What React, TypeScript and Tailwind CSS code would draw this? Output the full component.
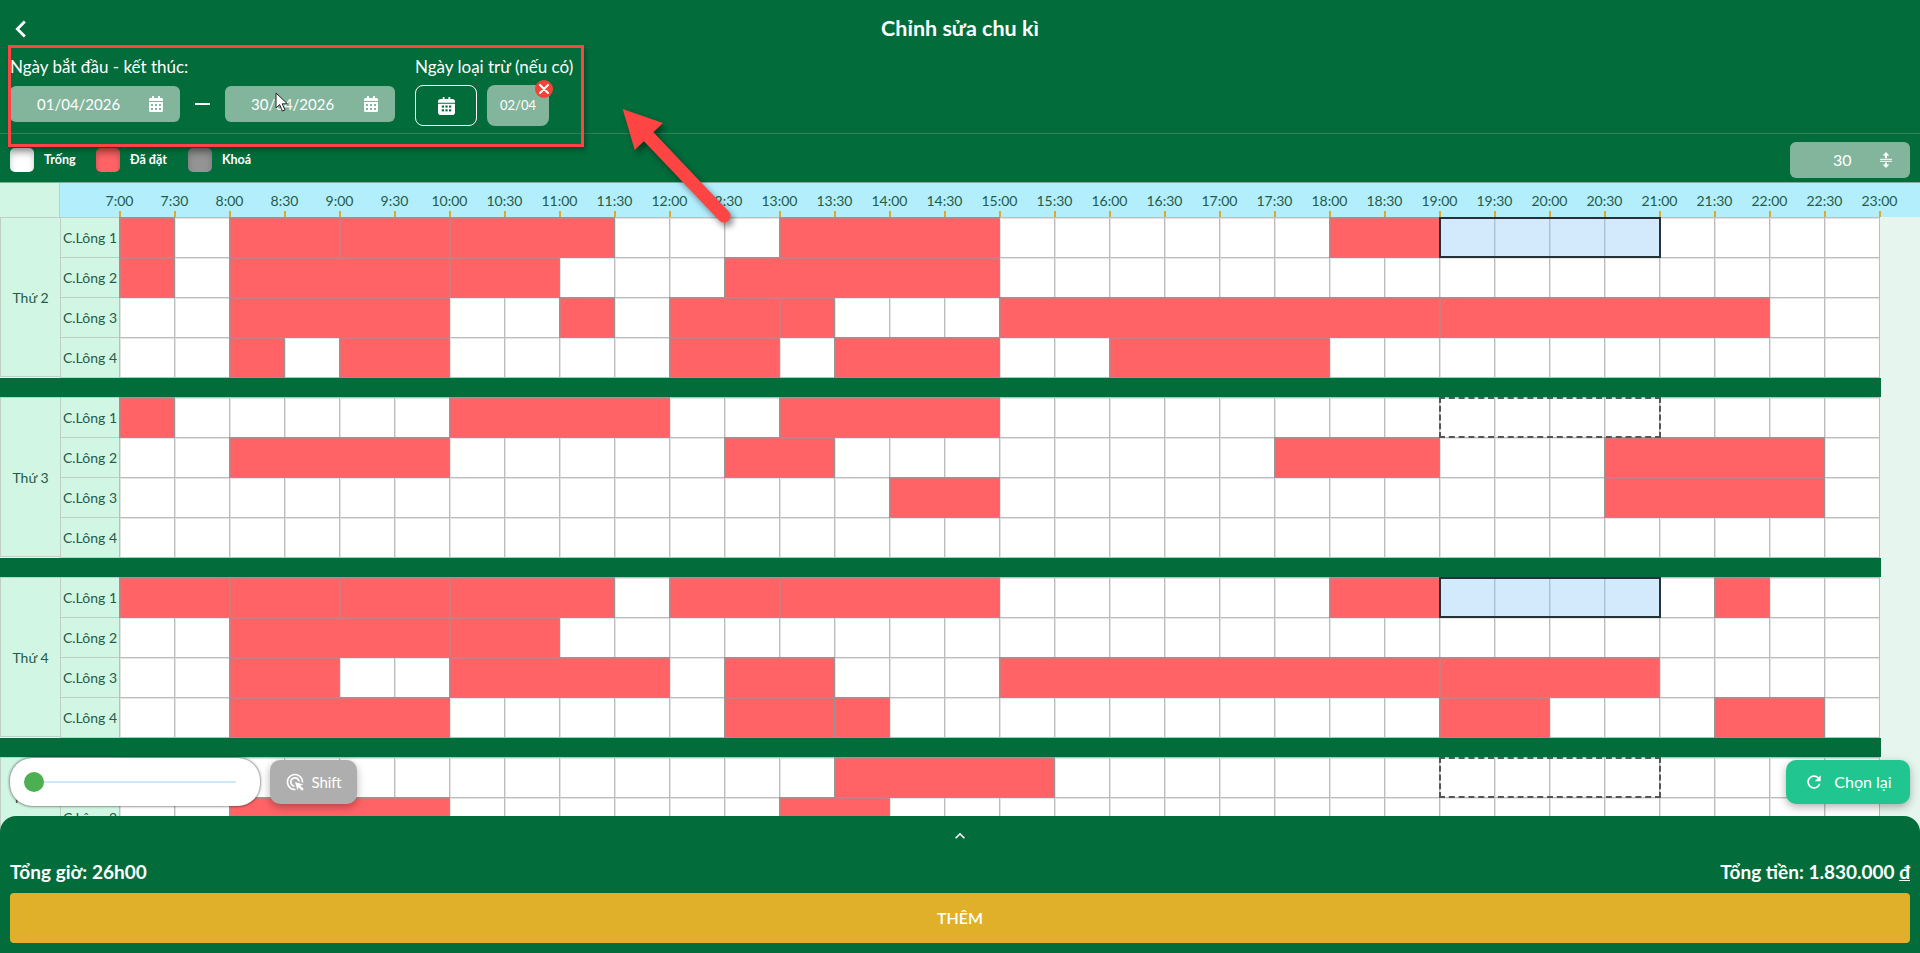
import React from 'react';
import { FaCalendarAlt } from 'react-icons/fa';
import { MdAdsClick, MdRefresh, MdChevronLeft, MdKeyboardArrowUp } from 'react-icons/md';

type Range = [number, number];

interface CourtRow {
  name: string;
  booked: Range[];
  mark?: 'selected' | 'dashed';
}

interface DayGroup {
  day: string;
  rows: CourtRow[];
}

const times = Array.from({ length: 33 }, (_, i) => `${7 + Math.floor(i / 2)}:${i % 2 ? '30' : '00'}`);

const days: DayGroup[] = [
  {
    day: 'Thứ 2',
    rows: [
      { name: 'C.Lông 1', booked: [[0, 1], [2, 4], [4, 6], [6, 9], [12, 16], [22, 24]], mark: 'selected' },
      { name: 'C.Lông 2', booked: [[0, 1], [2, 6], [6, 8], [11, 16]] },
      { name: 'C.Lông 3', booked: [[2, 6], [8, 9], [10, 12], [12, 13], [16, 24], [24, 30]] },
      { name: 'C.Lông 4', booked: [[2, 3], [4, 6], [10, 12], [13, 16], [18, 22]] },
    ],
  },
  {
    day: 'Thứ 3',
    rows: [
      { name: 'C.Lông 1', booked: [[0, 1], [6, 10], [12, 16]], mark: 'dashed' },
      { name: 'C.Lông 2', booked: [[2, 6], [11, 13], [21, 24], [27, 31]] },
      { name: 'C.Lông 3', booked: [[14, 16], [27, 31]] },
      { name: 'C.Lông 4', booked: [] },
    ],
  },
  {
    day: 'Thứ 4',
    rows: [
      { name: 'C.Lông 1', booked: [[0, 2], [2, 4], [4, 6], [6, 9], [10, 12], [12, 16], [22, 24], [29, 30]], mark: 'selected' },
      { name: 'C.Lông 2', booked: [[2, 6], [6, 8]] },
      { name: 'C.Lông 3', booked: [[2, 4], [6, 10], [11, 13], [16, 24], [24, 28]] },
      { name: 'C.Lông 4', booked: [[2, 6], [11, 13], [13, 14], [24, 26], [29, 31]] },
    ],
  },
  {
    day: 'Thứ 5',
    rows: [
      { name: 'C.Lông 1', booked: [[13, 17]], mark: 'dashed' },
      { name: 'C.Lông 2', booked: [[2, 6], [12, 14]] },
    ],
  },
];

const SLOT = 55;

const Slots: React.FC<{ booked: Range[] }> = ({ booked }) => {
  const cells: React.ReactNode[] = [];
  let i = 0;
  while (i < 32) {
    const hit = booked.find(b => b[0] === i);
    if (hit) {
      const n = hit[1] - hit[0];
      cells.push(
        <div
          key={i}
          className="relative z-10 h-[41px] shrink-0 -mr-px border border-[#969696] bg-[#ff6366] shadow-[inset_1px_1px_0_rgba(150,150,150,0.45)]"
          style={{ width: SLOT * n + 1 }}
        />
      );
      i += n;
    } else {
      cells.push(
        <div
          key={i}
          className="h-[41px] w-[56px] shrink-0 -mr-px border border-[#bdbdbd] bg-white shadow-[inset_1px_1px_0_#e4e4e4]"
        />
      );
      i += 1;
    }
  }
  return <>{cells}</>;
};

const CalendarBadge = () => (
  <svg width="17" height="18" viewBox="0 0 18 19">
    <path d="M3 2h2V0.8a1 1 0 0 1 2 0V2h4V0.8a1 1 0 0 1 2 0V2h2a3 3 0 0 1 3 3v1H0V5a3 3 0 0 1 3-3z" fill="#fff" />
    <path d="M0 7h18v9a3 3 0 0 1-3 3H3a3 3 0 0 1-3-3z" fill="#fff" />
    <g fill="#006c3a">
      <rect x="4" y="9" width="2.4" height="2.2" />
      <rect x="7.8" y="9" width="2.4" height="2.2" />
      <rect x="11.6" y="9" width="2.4" height="2.2" />
      <rect x="4" y="13" width="2.4" height="2.2" />
      <rect x="7.8" y="13" width="2.4" height="2.2" />
      <rect x="11.6" y="13" width="2.4" height="2.2" />
    </g>
  </svg>
);

const SpreadIcon = () => (
  <svg width="12" height="16" viewBox="0 0 12 16" fill="#fff">
    <path d="M6 0l3.4 3.6H7V6.2H5V3.6H2.6z" />
    <rect x="0" y="6.8" width="12" height="1" />
    <rect x="0" y="8.8" width="12" height="1" />
    <path d="M6 16l3.4-3.6H7V10.4H5v2H2.6z" />
  </svg>
);

const LegendItem: React.FC<{ swatch: string; label: string; width: string }> = ({ swatch, label, width }) => (
  <div className={`flex items-center gap-[10px] ${width}`}>
    <span className={`h-6 w-6 rounded-[5px] shadow-[inset_0_6px_6px_rgba(0,0,0,0.22)] ${swatch}`} />
    <span className="text-[12.5px] font-bold text-white">{label}</span>
  </div>
);

export default function App() {
  return (
    <div className="relative flex h-screen w-full flex-col overflow-hidden bg-[#e6f6ee] font-['Lato','Noto_Sans',sans-serif]">
      {/* Header */}
      <header className="h-[182px] shrink-0 bg-[#026c3b] text-white">
        <div className="relative flex h-[56px] items-center justify-center">
          <MdChevronLeft size={34} className="absolute left-[4px] top-[12px]" />
          <h1 className="text-[21.5px] font-bold">Chỉnh sửa chu kì</h1>
        </div>

        <div className="flex h-[77px] gap-5 px-[10px]">
          <div className="w-[385px]">
            <div className="h-[22px] text-[17px] leading-[22px]">Ngày bắt đầu - kết thúc:</div>
            <div className="mt-2 flex items-center">
              <div className="flex h-9 w-[170px] items-center rounded-md bg-[#82b59c] pl-[27px] pr-4">
                <span className="flex-1 text-[15px]">01/04/2026</span>
                <FaCalendarAlt size={16} />
              </div>
              <div className="mx-[15px] h-0.5 w-[15px] bg-white" />
              <div className="flex h-9 w-[170px] items-center rounded-md bg-[#82b59c] pl-[26px] pr-4">
                <span className="flex-1 text-[15px]">30/04/2026</span>
                <FaCalendarAlt size={16} />
              </div>
            </div>
          </div>
          <div>
            <div className="h-[22px] text-[17px] leading-[22px]">Ngày loại trừ (nếu có)</div>
            <div className="mt-[7px] flex gap-[10px]">
              <div className="flex h-[41px] w-[62px] items-center justify-center rounded-lg border border-white">
                <CalendarBadge />
              </div>
              <div className="relative flex h-[41px] w-[62px] items-center justify-center rounded-lg bg-[#82b59c] text-[13px]">
                02/04
                <span className="absolute -right-[4px] -top-[5px] flex h-[18px] w-[18px] items-center justify-center rounded-full bg-[#f44336]">
                  <svg width="10" height="10" viewBox="0 0 10 10" stroke="#fff" strokeWidth="2" strokeLinecap="round">
                    <path d="M1 1l8 8M9 1l-8 8" />
                  </svg>
                </span>
              </div>
            </div>
          </div>
        </div>

        <div className="h-px bg-[#2f8259]" />

        <div className="flex h-[48px] items-center justify-between pl-[10px] pr-[10px] pt-1">
          <div className="flex">
            <LegendItem swatch="bg-white" label="Trống" width="w-[86px]" />
            <LegendItem swatch="bg-[#ff6366]" label="Đã đặt" width="w-[92px]" />
            <LegendItem swatch="bg-[#949494]" label="Khoá" width="w-[80px]" />
          </div>
          <div className="flex h-9 w-[120px] items-center rounded-md bg-[#82b59c] pl-[43px] pr-[18px]">
            <span className="flex-1 text-base">30</span>
            <SpreadIcon />
          </div>
        </div>
      </header>

      {/* Schedule grid */}
      <main className="min-h-0 flex-1 overflow-hidden">
        <div className="flex h-[35px] border-t border-[#7fae9a]">
          <div className="w-[60px] shrink-0 border-r border-[#bfcfc6] bg-[#d1f6e4]" />
          <div className="flex flex-1 bg-[#b3eefd] pl-[32px]">
            {times.map(t => (
              <div key={t} className="relative w-[55px] shrink-0 pt-[8px] text-center text-sm leading-5 text-[#245a48]">
                {t}
                <span className="absolute bottom-0 left-[27px] h-[6px] w-0.5 bg-[#e5a823]" />
              </div>
            ))}
          </div>
        </div>

        {days.map(group => (
          <div key={group.day} className="flex w-[1881px] flex-col">
            <div className="flex">
              <div className="flex w-[60px] shrink-0 items-center justify-center border border-r-0 border-[#bfcfc6] bg-[#d1f6e4] pt-px text-sm text-[#245a48]">
                {group.day}
              </div>
              <div className="flex-1">
                {group.rows.map(row => (
                  <div key={row.name} className="relative flex h-10">
                    <div className="flex h-[41px] w-[60px] shrink-0 items-center justify-center border border-[#bfcfc6] bg-[#d1f6e4] -mr-px pt-px text-sm text-[#245a48]">
                      {row.name}
                    </div>
                    <Slots booked={row.booked} />
                    {row.mark === 'selected' && (
                      <div className="absolute left-[1379px] top-0 z-20 h-[41px] w-[222px] border-2 border-[#263238] bg-[#90caf9]/40" />
                    )}
                    {row.mark === 'dashed' && (
                      <div className="absolute left-[1379px] top-0 z-20 h-[41px] w-[222px] border-2 border-dashed border-[#555]" />
                    )}
                  </div>
                ))}
              </div>
            </div>
            <div className="mt-px h-[19px] bg-[#026c3b]" />
          </div>
        ))}
      </main>

      {/* Floating controls */}
      <div className="absolute left-[10px] top-[758px] z-30 flex h-12 w-[250px] items-center rounded-[22px] bg-white pl-[14px] shadow-[0_0_3px_rgba(0,0,0,0.8)]">
        <span className="relative z-10 h-5 w-5 rounded-full bg-[#4caf50]" />
        <span className="h-0.5 w-[192px] bg-[#cfe8fa]" />
      </div>
      <button className="absolute left-[270px] top-[760px] z-30 flex h-11 w-[87px] items-center justify-center gap-[6px] rounded-[10px] bg-[#aeaeae] text-[15px] text-white shadow-[0_3px_8px_rgba(0,0,0,0.3)]">
        <MdAdsClick size={20} />
        Shift
      </button>
      <button className="absolute left-[1786px] top-[760px] z-30 flex h-11 w-[124px] items-center justify-center gap-[10px] rounded-[10px] bg-[#20c58f] text-base text-white shadow-[0_3px_8px_rgba(0,0,0,0.3)]">
        <MdRefresh size={20} />
        Chọn lại
      </button>

      {/* Bottom panel */}
      <footer className="relative z-20 -mt-5 flex h-[137px] shrink-0 flex-col rounded-t-[16px] bg-[#026c3b] px-[10px] text-white">
        <div className="flex h-[36px] items-center justify-center pt-[4px]">
          <MdKeyboardArrowUp size={20} />
        </div>
        <div className="mt-[8px] flex h-[24px] items-center justify-between text-[19px] font-bold">
          <span>Tổng giờ: 26h00</span>
          <span>
            Tổng tiền: 1.830.000 <span className="underline">đ</span>
          </span>
        </div>
        <button className="mt-[9px] h-[50px] rounded bg-[#e1b02a] text-base font-semibold text-white">THÊM</button>
      </footer>

      {/* Annotation overlay */}
      <div className="pointer-events-none absolute left-[8px] top-[45px] z-40 h-[102px] w-[576px] border-[3px] border-[#ff4444] shadow-[2px_3px_5px_rgba(0,0,0,0.3)]" />
      <svg
        className="pointer-events-none absolute left-0 top-0 z-40 drop-shadow-[3px_4px_3px_rgba(0,0,0,0.45)]"
        width="800"
        height="260"
        viewBox="0 0 800 260"
      >
        <path d="M622.7 109L663 123L634.7 150Z" fill="#ff4444" />
        <line x1="648" y1="136" x2="724" y2="216" stroke="#ff4444" strokeWidth="13" strokeLinecap="round" />
      </svg>
      <svg className="pointer-events-none absolute left-[275px] top-[92px] z-40" width="14" height="20" viewBox="0 0 14 20">
        <path d="M1 1v15l3.6-3.4L7.4 19l2.6-1.2-2.8-6H12.4z" fill="#fff" stroke="#222" strokeWidth="1" />
      </svg>
    </div>
  );
}
